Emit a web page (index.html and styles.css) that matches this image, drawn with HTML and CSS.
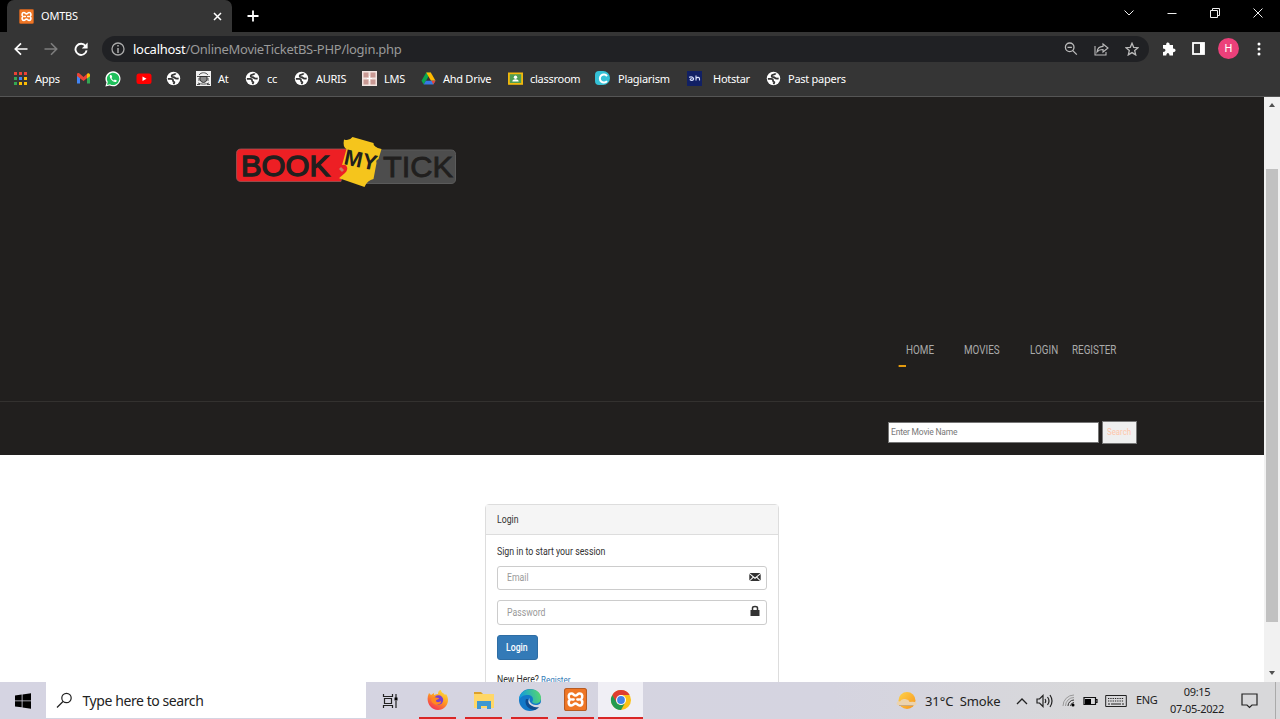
FILE: index.html
```html
<!DOCTYPE html>
<html lang="en">
<head>
<meta charset="utf-8">
<title>OMTBS</title>
<link rel="stylesheet" href="styles.css">
</head>
<body>
<svg class="defs" width="0" height="0" aria-hidden="true">
  <symbol id="globe" viewBox="0 0 16 16"><circle cx="8" cy="8" r="7.200" fill="#fff"/><path d="M2 8.300h3.500q2 0 2 1.700t1 1.700-.5 2.300M10.300 2.500C9.500 4.300 6 3.500 6 5.300c0 2 2.500.7 3.500 2s2 1 4 .5" fill="none" stroke="#353535" stroke-width="1.900"/></symbol>
  <symbol id="xampp" viewBox="0 0 22 22"><rect x=".5" y=".5" width="21" height="21" rx="2" fill="#ef7625" stroke="#b85b22"/><path d="M7.200 5.200c2 0 2 2 3.800 2s1.800-2 3.800-2c3.200 0 3.400 4 1.400 5.800 2 1.800 1.800 5.800-1.400 5.800-2 0-2-2-3.800-2s-1.800 2-3.800 2c-3.200 0-3.400-4-1.400-5.800C3.800 9.200 4 5.200 7.200 5.200z" fill="none" stroke="#fff" stroke-width="2.400"/><path d="M7.500 11h1.800M12.700 11h1.800" stroke="#fff" stroke-width="2.200" stroke-linecap="round"/></symbol>
</svg>

<header class="browser">
  <div class="tabs">
    <div class="tab"><svg width="15" height="15"><use href="#xampp"/></svg><span class="tab-title">OMTBS</span>
      <svg class="tab-close" width="9" height="9" viewBox="0 0 9 9"><path d="M1 1l7 7M8 1L1 8" stroke="#fff" stroke-width="1.500"/></svg></div>
    <svg class="new-tab" width="12" height="12" viewBox="0 0 12 12"><path d="M6 .5v11M.5 6h11" stroke="#fff" stroke-width="1.800"/></svg>
    <div class="window-controls">
      <svg width="12" height="12" viewBox="0 0 12 12"><path d="M1.500 3.500L6 8l4.500-4.500"/></svg>
      <svg width="12" height="12" viewBox="0 0 12 12"><path d="M1.500 6.500h9"/></svg>
      <svg width="12" height="12" viewBox="0 0 12 12"><path d="M1.500 3.500h7v7h-7zM3.500 3.500v-2h7v7h-2"/></svg>
      <svg width="12" height="12" viewBox="0 0 12 12"><path d="M1.500 1.500l9 9M10.500 1.500l-9 9"/></svg>
    </div>
  </div>
  <div class="toolbar">
    <div class="nav-buttons">
      <svg width="14" height="14" viewBox="0 0 14 14"><path d="M13.500 7H1.500M7 1.300L1.300 7 7 12.700" fill="none" stroke="#fff" stroke-width="1.700"/></svg>
      <svg width="14" height="14" viewBox="0 0 14 14"><path d="M.5 7h12M7 1.300L12.700 7 7 12.700" fill="none" stroke="#7d7d7d" stroke-width="1.600"/></svg>
      <svg width="14" height="14" viewBox="0 0 14 14"><path d="M11.600 4A5.600 5.600 0 1 0 12.600 8.300" fill="none" stroke="#fff" stroke-width="1.900"/><path d="M13.600.5v6H7.800z" fill="#fff"/></svg>
    </div>
    <div class="address">
      <svg width="14" height="14" viewBox="0 0 14 14"><circle cx="7" cy="7" r="6" fill="none" stroke="#aaa" stroke-width="1.300"/><path d="M7 3v1.600M7 6v5" stroke="#aaa" stroke-width="1.500"/></svg>
      <span class="url"><b>localhost</b>/OnlineMovieTicketBS-PHP/login.php</span>
      <div class="address-actions">
        <svg width="14" height="14" viewBox="0 0 14 14"><path d="M10 5.300a4.300 4.300 0 1 1-8.600 0 4.300 4.300 0 0 1 8.600 0M8.800 8.600l4 4M3.500 5.300h4.400"/></svg>
        <svg width="15" height="14" viewBox="0 0 15 14"><path d="M1 4v9h11v-3M3 10c.4-3.800 2.800-5.500 6-5.600V2l5 4-5 4V7.500C6.500 7.500 4.500 8 3 10z" stroke-width="1.100"/></svg>
        <svg width="14" height="14" viewBox="0 0 14 14"><path d="M7 1.300l1.700 4 4.300.4-3.300 2.900 1 4.300L7 10.600l-3.700 2.300 1-4.300L1 5.700l4.300-.4z"/></svg>
      </div>
    </div>
    <div class="extensions">
      <svg width="14" height="14" viewBox="0 0 14 14"><path d="M1 3h3.200C3.700-.2 8-.2 7.700 3H11v3.400c3.400-.3 3.400 4 0 3.800V13.500H7.500C7.500 10 4.300 10 4.300 13.500H1V10c3.200 0 3.200-3.500 0-3.500z" fill="#fff"/></svg>
      <svg width="13" height="13" viewBox="0 0 13 13"><rect x="1" y="1" width="11" height="11" fill="none" stroke="#fff" stroke-width="1.800"/><path d="M8 1h4v11H8z" fill="#fff"/></svg>
      <span class="avatar">H</span>
      <svg class="more" width="4" height="14" viewBox="0 0 4 14"><g fill="#fff"><circle cx="2" cy="2" r="1.500"/><circle cx="2" cy="7" r="1.500"/><circle cx="2" cy="12" r="1.500"/></g></svg>
    </div>
  </div>
  <nav class="bookmarks">
    <a class="bm apps"><svg width="15" height="15" viewBox="0 0 15 15"><path d="M1 1h3v3H1zM6 1h3v3H6zM11 1h3v3h-3z" fill="#e94235"/><path d="M1 6h3v3H1z" fill="#34a853"/><path d="M6 6h3v3H6z" fill="#4285f4"/><path d="M11 6h3v3h-3zM11 11h3v3h-3zM6 11h3v3H6z" fill="#fbbc04"/><path d="M1 11h3v3H1z" fill="#34a853"/></svg>Apps</a>
    <a class="bm gmail"><svg width="15" height="15" viewBox="0 0 15 15"><path d="M1 4v8.500h3V7" fill="#4285f4"/><path d="M11 7v5.500h3V4" fill="#34a853"/><path d="M1 3.500c0-1.500 1.500-1.700 2.500-1L7.500 6l4-3.500v4.200l-4 3.300L1 5z" fill="#ea4335"/><path d="M11 3c1-1.300 3-.5 3 1v1.200l-3 2.200z" fill="#fbbc04"/></svg></a>
    <a class="bm whatsapp"><svg width="16" height="16" viewBox="0 0 16 16"><path d="M.4 15.600l1.100-4A7.500 7.500 0 1 1 4.600 14.500z" fill="#fff"/><path d="M2 14l.8-3A6.200 6.200 0 1 1 5 13.200z" fill="#20c05c"/><path d="M5.200 4c-2 2 2.900 8.200 6 6.900l.6-1.500-2-1-.9 1C7.700 9 7 8.200 6.500 7l.8-1-.9-2z" fill="#fff"/></svg></a>
    <a class="bm youtube"><svg width="16" height="16" viewBox="0 0 16 16"><rect x=".5" y="2.500" width="15" height="10.500" rx="2.500" fill="#f00"/><path d="M6.500 5.500v4.600l4-2.300z" fill="#fff"/></svg></a>
    <a class="bm site"><svg width="15" height="15"><use href="#globe"/></svg></a>
    <a class="bm at"><svg width="15" height="15" viewBox="0 0 15 15"><path d="M0 0h15v15H0z" fill="#f1f1f1"/><path d="M3 4c2-3 7-3 9 0M1 5.500h13M2 12c3 1.500 8 1.500 11 0M1 13.500h3M11 13.500h3M3 7v3M12 7v3" stroke="#555" fill="none"/><path d="M4 5.500h7v3q-1 3-3.500 3T4 8.500z" fill="#888" stroke="#333"/></svg>At</a>
    <a class="bm cc"><svg width="15" height="15"><use href="#globe"/></svg>cc</a>
    <a class="bm auris"><svg width="15" height="15"><use href="#globe"/></svg>AURIS</a>
    <a class="bm lms"><svg width="15" height="15" viewBox="0 0 15 15"><path d="M0 0h15v15H0z" fill="#f2e4e1"/><path d="M1.500 1.500h5v5h-5zM8.500 1.500h5v5h-5zM1.500 8.500h5v5h-5zM8.500 8.500h5v5h-5z" fill="#c99994"/><path d="M5 7.500h5M7.500 5v5" stroke="#fff"/></svg>LMS</a>
    <a class="bm drive"><svg width="15" height="15" viewBox="0 0 15 15"><path d="M5.200 1.500h4.600L4.900 10 2.700 13.500.5 9.700z" fill="#0aa64f"/><path d="M5.200 1.500h4.600l4.700 8.200H10z" fill="#ffba00"/><path d="M4.900 9.700h9.600l-2.200 3.800H2.700z" fill="#3779e5"/><path d="M10.500 9.700h4l-2.200 3.800z" fill="#ea4335"/></svg>Ahd Drive</a>
    <a class="bm classroom"><svg width="15" height="15" viewBox="0 0 15 15"><path d="M0 1.500h15v12.300H0z" fill="#f2b80c"/><path d="M1.800 3.200h11.400v8.800H1.800z" fill="#4f9c51"/><circle cx="7.500" cy="6.200" r="1.700" fill="#fff"/><path d="M4.300 10.500c0-3 6.400-3 6.400 0z" fill="#fff"/></svg>classroom</a>
    <a class="bm plagiarism"><svg width="15" height="15" viewBox="0 0 15 15"><path d="M0 4a4 4 0 0 1 4-4h4a7 7 0 0 1 0 14H4a4 4 0 0 1-4-4z" fill="#35c1d6"/><path d="M12 5a4 4 0 1 0 0 5" fill="none" stroke="#fff" stroke-width="2"/></svg>Plagiarism</a>
    <a class="bm hotstar"><svg width="15" height="15" viewBox="0 0 15 15"><path d="M0 0h15v15H0z" fill="#112064"/><path d="M2 6.200c5-1.500 6 3.300 2.700 3.300-2.500 0-1.700-2.200.8-1.500M9 4.500v5M9 7.500c1-1.700 3.500-1.500 3.500.3v1.700" fill="none" stroke="#dce4ff" stroke-width="1.100"/></svg>Hotstar</a>
    <a class="bm papers"><svg width="15" height="15"><use href="#globe"/></svg>Past papers</a>
  </nav>
</header>

<div class="viewport">
  <main class="page">
    <section class="masthead">
      <svg class="logo" width="222" height="52" viewBox="235 136 222 52">
        <path d="M365 150h86q4.500 0 4.500 4.500v24.500q0 4.500-4.500 4.500h-86z" fill="#4d4d4d" stroke="#5b5b5b"/>
        <path d="M347 149H241q-4.500 0-4.500 4.500V177q0 4.500 4.500 4.500h100z" fill="#ed1f24" stroke="#9e5555" stroke-width=".8"/>
        <g font-family="'Liberation Sans',sans-serif" font-size="29" fill="#211f1e" stroke="#211f1e">
          <text x="241" y="175.500" textLength="89" lengthAdjust="spacingAndGlyphs" stroke-width="1.300">BOOK</text>
          <text x="383" y="177" textLength="70" lengthAdjust="spacingAndGlyphs" stroke-width=".8">TICK</text>
        </g>
        <path d="M344 139.500q5 2 8.500-2.500l21 6q-.5 4 8 6l-3 10q-3 1-2 4l-3 16q-6 1-9 8l-26-9 8-29q-4-2-2.500-9.500z" fill="#f5c51c"/>
        <text transform="translate(343 164) rotate(12)" font-family="'Liberation Sans',sans-serif" font-size="22" font-weight="bold" textLength="33" lengthAdjust="spacingAndGlyphs" fill="#211f1e">MY</text>
        <path d="M335 180v-10l7-5q4-1 5 2t-2 6l-7 6z" fill="#ed1f24"/><path d="M339 169l2-2 3 3-2 2z" fill="#c97c61"/>
      </svg>
      <nav class="menu"><a class="home">HOME</a><a class="movies">MOVIES</a><a class="login-link">LOGIN</a><a>REGISTER</a></nav>
    </section>
    <form class="search"><input type="text" placeholder="Enter Movie Name" aria-label="Movie name"><button type="button"><span>Search</span></button></form>
    <section class="panel">
      <h1><span>Login</span></h1>
      <div class="panel-body">
        <p class="intro"><span>Sign in to start your session</span></p>
        <div class="field"><span>Email</span><svg width="12" height="10" viewBox="0 0 12 10"><path d="M.5 1h11L6 5.500zM.3 2l3.400 3L.3 8.500zM11.700 2v6.500L8.300 5zM1 9l3.500-3.300L6 7l1.500-1.300L11 9z" fill="#333"/></svg></div>
        <div class="field password"><span>Password</span><svg width="12" height="12" viewBox="0 0 12 12"><path d="M1.500 5h9v6h-9z" fill="#333"/><path d="M3.500 5.500V3q0-1.600 2.500-1.600T8.500 3v2.500" fill="none" stroke="#333" stroke-width="1.500"/></svg></div>
        <button class="login" type="button"><span>Login</span></button>
        <p class="signup"><span>New Here? <a>Register</a></span></p>
      </div>
    </section>
  </main>
  <div class="scrollbar"><i class="arrow up"></i><div class="thumb"></div><i class="arrow down"></i></div>
</div>

<footer class="taskbar">
  <div class="start"><svg width="16" height="16" viewBox="0 0 16 16"><path d="M0 2.400l6.700-.9v6H0zM7.500 1.400L16 .2v7.300H7.500zM0 8.300h6.700v6L0 13.500zM7.500 8.300H16v7.500l-8.500-1.300z"/></svg></div>
  <div class="task-search"><svg width="17" height="17" viewBox="0 0 17 17"><circle cx="10.500" cy="6" r="4.700" fill="none" stroke="#222" stroke-width="1.200"/><path d="M7 9.500L1 15.500" stroke="#222" stroke-width="1.300"/></svg><span>Type here to search</span></div>
  <div class="task-view"><svg width="17" height="16" viewBox="0 0 17 16"><path d="M1.500 1v2.500h9V1M2.500 5.500h7v5h-7zM1.500 15v-2.500h9V15M14 1v4M14 8v7" fill="none" stroke="#222" stroke-width="1.200"/><path d="M12.500 4.500h3v3h-3z"/></svg></div>
  <div class="pinned">
    <div class="app"><svg width="22" height="22" viewBox="0 0 22 22"><defs><linearGradient id="fire" x1=".8" y1="0" x2=".2" y2="1"><stop stop-color="#ffe13a"/><stop offset=".45" stop-color="#ff9a22"/><stop offset="1" stop-color="#f2265b"/></linearGradient></defs><path d="M2 4l2 2 3-2v2c2-1 3-1 4-1 0-2 1-4 3-4 0 3 3 3 4 5l1-1c5 7 0 16-8 16S-2 12 2 4z" fill="url(#fire)"/><circle cx="11.500" cy="11" r="4.700" fill="#793ed0"/><path d="M6 8c3 0 3 1 6 1 0 2-3 1-3 3 1 2 4 1 5 0 1 4-8 6-10-1z" fill="#ff8a20"/></svg></div>
    <div class="app"><svg width="22" height="22" viewBox="0 0 22 22"><path d="M1 3h7l2 2H1z" fill="#dca12b"/><path d="M1 5h20v14H1z" fill="#ffd767"/><path d="M4 12h14v8h-4v-3H8v3H4z" fill="#3e97d2"/></svg></div>
    <div class="app"><svg width="24" height="24" viewBox="0 0 24 24"><defs><linearGradient id="sea" x1="0" y1=".2" x2="1" y2="0"><stop stop-color="#129bdc"/><stop offset="1" stop-color="#5bdc67"/></linearGradient></defs><circle cx="12" cy="12" r="11" fill="#1478c8"/><path d="M1 12C1-2 23-2 23 10c0 6-6 7-9 4 2-2 1-7-4-7-4 0-7 1-9 5z" fill="url(#sea)"/><path d="M8 11c-2 5 2 11 9 11 3-1 4-3 4.500-4-6 2-12-1-11.500-7z" fill="#104b8f"/><path d="M12 10q-2 3 2 6c3 2 7 1 9-1l1 3-2 1c-4 1-11-1-11.500-5-.2-2 .5-3 1.500-4z" fill="#d5d6e0"/></svg></div>
    <div class="app"><svg width="23" height="23"><use href="#xampp"/></svg></div>
    <div class="app active"><svg width="22" height="22" viewBox="0 0 22 22"><circle cx="11" cy="11" r="10" fill="#fbc116"/><path d="M2.300 6A10 10 0 0 1 19.700 6H11l-5 8z" fill="#df3e30"/><path d="M2.300 6A10 10 0 0 0 11 21l4.300-7.500A5 5 0 0 1 6.700 13.500z" fill="#239b50"/><circle cx="11" cy="11" r="5" fill="#fff"/><circle cx="11" cy="11" r="3.900" fill="#4384e8"/></svg></div>
  </div>
  <div class="tray">
    <svg width="22" height="20" viewBox="0 0 22 20"><defs><linearGradient id="sun" x1="0" y1="0" x2="1" y2="1"><stop stop-color="#ffd34a"/><stop offset="1" stop-color="#f7941d"/></linearGradient></defs><circle cx="11" cy="9.500" r="8.500" fill="url(#sun)"/><path d="M4 14.500q-4-.2-3.300-2.500T4 10.500q1-3 5-2.500t4.500 3q5-1 7 1 .8 2.500-3 2.500z" fill="#ecd3ae"/><path d="M3 14.500h14" stroke="#c9aa80"/></svg>
    <span class="temperature">31°C&ensp;Smoke</span>
    <svg class="chevron" width="12" height="8" viewBox="0 0 12 8"><path d="M1 7l5-5 5 5" fill="none" stroke="#222" stroke-width="1.300"/></svg>
    <svg class="sound" width="17" height="14" viewBox="0 0 17 14"><path d="M1 5h2.500L7 1.500v11L3.500 9H1zM9 5q1.500 2 0 4M11.500 3q3 4 0 8M14 1q4 6 0 12" fill="none" stroke="#222" stroke-width="1.200"/></svg>
    <svg class="wifi" width="13" height="13" viewBox="0 0 13 13"><path d="M1 12A11 11 0 0 1 12 1M3.500 12A8.500 8.500 0 0 1 12 3.500" fill="none" stroke="#999"/><path d="M6 12A6 6 0 0 1 12 6M8.500 12A4 4 0 0 1 12 8.500" fill="none" stroke="#333"/><circle cx="11" cy="11" r="1.500"/></svg>
    <svg class="battery" width="15" height="10" viewBox="0 0 15 10"><path d="M1 1.500h11.500v7H1zM13 3.500h1v3h-1" fill="none" stroke="#111" stroke-width="1.200"/><path d="M2 3h6v5H2z"/></svg>
    <svg class="keyboard" width="22" height="14" viewBox="0 0 22 14"><path d="M.7 1.500h20.600v11H.7z" fill="none" stroke="#222"/><path d="M3 4.500h16M3 7h16" stroke="#222" stroke-dasharray="1.300 1" stroke-width="1.200"/><path d="M3 10h2M6 10h10M17 10h2" stroke="#222"/></svg>
    <span class="language">ENG</span>
    <div class="clock"><span>09:15</span><span>07-05-2022</span></div>
    <svg class="notice" width="17" height="17" viewBox="0 0 17 17"><path d="M1 2h15v11h-5l-2.500 2.500L6 13H1z" fill="none" stroke="#222" stroke-width="1.200"/></svg>
    <i class="desktop-edge"></i>
  </div>
</footer>
</body>
</html>
```

FILE: styles.css
```css
* { box-sizing: border-box; }
body { margin: 0; width: 1280px; height: 719px; overflow: hidden; display: flex; flex-direction: column; font-family: "Noto Sans", sans-serif; }
svg { display: block; flex: none; }
.defs { position: absolute; }
.browser { height: 97px; background: #353535; color: #fff; border-bottom: 1px solid #555; flex: none; }
.tabs { height: 32px; background: #000; display: flex; align-items: center; padding-left: 7px; }
.tab { height: 32px; width: 225px; border-radius: 7px 7px 0 0; background: #353535; display: flex; align-items: center; padding: 0 10px 0 12px; }
.tab-title { font-size: 11px; letter-spacing: -.2px; margin: -2px 0 0 7px; }
.tab-close { margin-left: auto; }
.new-tab { margin-left: 15px; }
.window-controls { margin-left: auto; display: flex; gap: 31px; padding: 0 16px 6px 0; }
.window-controls svg { fill: none; stroke: #eee; stroke-width: 1; }
.toolbar { height: 33px; display: flex; align-items: center; padding-left: 14px; }
.nav-buttons { width: 88px; display: flex; gap: 16px; }
.address { width: 1047px; height: 26px; border-radius: 13px; background: #202124; display: flex; align-items: center; padding: 0 10px 0 9px; }
.url { color: #999; font-size: 13px; letter-spacing: -.28px; margin-left: 8px; white-space: nowrap; }
.url b { color: #fff; font-weight: 400; }
.address-actions { display: flex; gap: 16px; margin-left: auto; }
.address-actions svg { fill: none; stroke: #bbb; stroke-width: 1.3; }
.extensions { display: flex; align-items: center; padding-left: 13px; }
.extensions svg + svg { margin-left: 16px; }
.avatar { width: 21px; height: 21px; border-radius: 50%; background: #ec407a; margin-left: 13px; display: flex; align-items: center; justify-content: center; font: 11px Roboto, sans-serif; }
.more { margin-left: 18px; }
.bookmarks { height: 27px; display: flex; align-items: center; padding-left: 13px; }
.bm { display: flex; align-items: center; gap: 7px; font-size: 11px; line-height: 15px; letter-spacing: -.27px; white-space: nowrap; flex: none; }
.apps { width: 63px; }
.gmail { width: 29px; }
.whatsapp { width: 31px; }
.youtube, .site { width: 30px; }
.at, .cc { width: 49px; }
.auris { width: 68px; }
.lms { width: 59px; }
.drive, .classroom { width: 87px; }
.plagiarism { width: 92px; gap: 8px; }
.hotstar { width: 79px; gap: 11px; }

.viewport { height: 585px; flex: none; display: flex; background: #fff; }
.page { width: 1264px; height: 585px; overflow: hidden; font-family: Roboto, sans-serif; }
.page span, .menu a { display: inline-block; transform: scaleX(.87); transform-origin: left; white-space: nowrap; }
.masthead { height: 305px; background: #211f1e; border-bottom: 1px solid #33312f; padding: 39px 0 0 235px; }
.menu { display: flex; color: #aaa; font-size: 12px; line-height: 16px; margin-top: 154px; padding-left: 671px; }
.menu a { transform: scaleX(.82); }
.home { width: 58px; }
.home::after { content: ""; display: block; width: 9px; height: 2px; background: #e49b0f; margin: 7px 0 0 -9px; }
.movies { width: 66px; }
.login-link { width: 42px; }
.search { height: 53px; background: #211f1e; display: flex; align-items: center; padding: 7px 0 0 888px; gap: 3px; }
.search input { width: 211px; height: 21px; border: 1px solid #767676; padding: 1px 2px; font: 8.5px Roboto, sans-serif; letter-spacing: -.2px; color: #777; }
.search input::placeholder { color: #777; opacity: 1; }
.search button { width: 35px; height: 23px; border: 1px solid #777; padding: 0 0 0 4px; background: #efefef; color: #ffc6aa; font: 9px Roboto, sans-serif; text-align: left; }
.panel { width: 294px; height: 210px; border: 1px solid #ddd; border-radius: 4px 4px 0 0; margin: 49px 0 0 485px; color: #333; font-size: 10px; }
.panel h1 { height: 30px; margin: 0; padding: 0 11px; background: #f5f5f5; border-bottom: 1px solid #ddd; font-size: 10px; font-weight: 400; line-height: 29px; }
.panel-body { padding: 10px 11px 0; }
.intro { margin: 0; line-height: 14px; padding-bottom: 7px; }
.intro span { transform: scaleX(.88); }
.field { width: 270px; height: 24px; border: 1px solid #ccc; border-radius: 3px; display: flex; align-items: center; justify-content: space-between; padding: 0 5px 1px 9px; color: #999; }
.field svg { margin-top: -2px; }
.password { margin: 10px 0; height: 25px; }
.login { display: block; width: 41px; height: 25px; border: 1px solid #2e6da4; border-radius: 3px; background: #337ab7; color: #fff; padding: 0 8px; font: 500 10px Roboto, sans-serif; text-align: left; }
.signup { margin: 13px 0 0; line-height: 14px; }
.signup a { color: #337ab7; font-size: 9.2px; }
.scrollbar { width: 16px; height: 585px; background: #f1f1f1; display: flex; flex-direction: column; align-items: center; }
.arrow { border: 3.5px solid transparent; width: 0; height: 0; }
.up { border-bottom-color: #505050; border-top: 0; border-bottom-width: 4px; margin-top: 6px; }
.down { border-top-color: #505050; border-bottom: 0; border-top-width: 4px; margin-top: auto; margin-bottom: 7px; }
.thumb { width: 12px; height: 453px; background: #c1c1c1; margin-top: 62px; }

.taskbar { height: 37px; flex: none; display: flex; background: linear-gradient(90deg, #d5d4e2, #d5d4e0 65%, #d8d8da 85%); color: #222; }
.start { width: 46px; padding: 11px 15px; }
.task-search { width: 320px; height: 36px; background: #fff; display: flex; align-items: center; padding-left: 10px; font-size: 14px; letter-spacing: -.42px; gap: 9.5px; }
.task-view { width: 48px; display: flex; align-items: center; justify-content: center; }
.pinned { display: flex; gap: 9px; margin-left: 5px; }
.app { width: 37px; height: 37px; border-bottom: 2px solid #d92626; display: flex; align-items: center; justify-content: center; }
.active { width: 45px; background: #f0eff5; margin-left: -5px; }
.tray { flex: 1; display: flex; align-items: center; padding-left: 253px; }
.temperature { font-size: 13px; letter-spacing: -.1px; margin-left: 7px; width: 91px; white-space: nowrap; }
.sound { margin-left: 8px; }
.wifi { margin-left: 9px; }
.battery { margin-left: 8px; }
.keyboard { margin-left: 7px; }
.language { font-size: 11px; letter-spacing: -.4px; margin: -2px 0 0 9px; width: 22px; }
.clock { width: 64px; margin: -2px 0 0 7px; font-size: 11px; letter-spacing: -.35px; line-height: 17px; display: flex; flex-direction: column; align-items: center; white-space: nowrap; }
.notice { margin-left: 12px; }
.desktop-edge { width: 1px; height: 37px; background: #aaa; margin-left: auto; margin-right: 4px; }
```
